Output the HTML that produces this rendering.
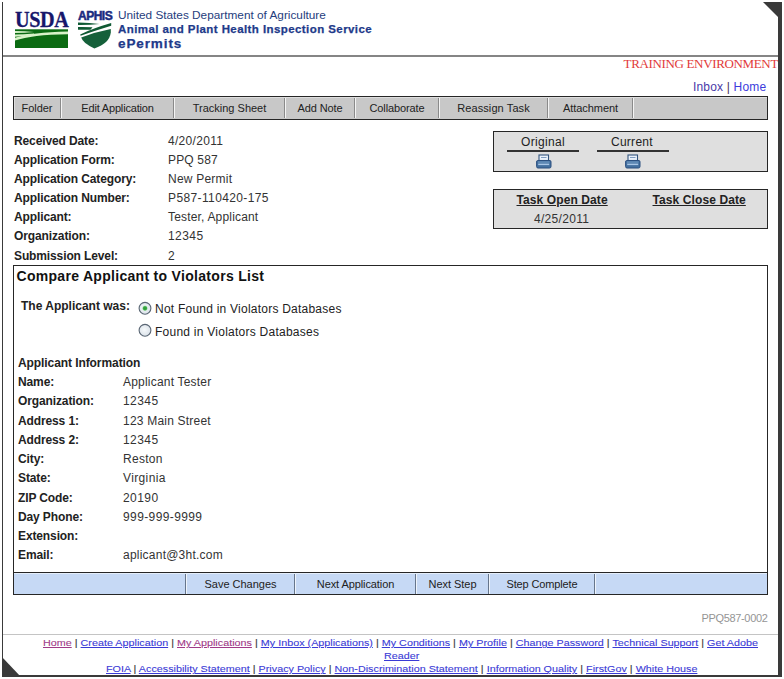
<!DOCTYPE html>
<html><head><meta charset="utf-8"><style>
html,body{margin:0;padding:0;}
body{width:784px;height:679px;position:relative;overflow:hidden;background:#fff;font-family:"Liberation Sans",sans-serif;}
.t{position:absolute;white-space:nowrap;font-kerning:none;}
</style></head><body>
<div class="t" style="left:14.5px;top:6.2px;font:bold 23.4px/26px 'Liberation Serif',serif;color:#17176b;transform:scaleX(0.865);transform-origin:0 0;letter-spacing:-0.5px;-webkit-text-stroke:0.3px #17176b">USDA</div><svg style="position:absolute;left:15px;top:29px" width="53" height="19" viewBox="0 0 53 19">
<rect x="0" y="0.3" width="53" height="18.7" fill="#0b6b12"/>
<path d="M0,2 Q10,2.2 19,3.1 Q10,4.1 0,4.1 Z" fill="#d8f2c8"/>
<path d="M0,5.4 Q8,5.3 19,4.4 L19,5.6 Q9,7.4 0,7.8 Z" fill="#d8f2c8"/>
<path d="M0,8.8 C12,5.2 28,3 53,2.6 L53,5.3 C28,5.6 12,7.8 0,11.6 Z" fill="#d8f2c8"/>
</svg><div class="t" style="left:78px;top:9px;font:900 12px/14px 'Liberation Sans',sans-serif;color:#1a2a80;-webkit-text-stroke:0.5px #1a2a80;letter-spacing:-0.5px">APHIS</div><svg style="position:absolute;left:78px;top:22px" width="34" height="27" viewBox="0 0 34 27">
<path d="M0,0.4 Q12,0.6 21.5,2 Q12,3.2 0,3.1 Z" fill="#0f5a34"/>
<path d="M0,5.1 Q8,5 14.5,5.3 L12.5,7.7 L0,7.7 Z" fill="#0f5a34"/>
<path d="M2.2,12.4 Q16,6 33.2,1.1 L33.2,3.7 Q17,8.6 2.6,13.8 Z" fill="#0f5a34"/>
<path d="M3.2,15.6 Q18,9.6 32.8,6.9 L32.8,10.5 Q31.5,21.5 16.4,26.4 Q5,21.5 3.2,15.6 Z" fill="#15603a"/>
</svg><div class="t" style="left:118px;top:8.41px;font:normal 11.8px/15px 'Liberation Sans',sans-serif;color:#263d7d;letter-spacing:0px;">United States Department of Agriculture</div>
<div class="t" style="left:118px;top:22.02px;font:bold 11.5px/14px 'Liberation Sans',sans-serif;color:#1e3a8a;letter-spacing:0.42px;-webkit-text-stroke:0.25px #1e3a8a;">Animal and Plant Health Inspection Service</div>
<div class="t" style="left:118px;top:35.32px;font:bold 13.5px/17px 'Liberation Sans',sans-serif;color:#1e3a8a;letter-spacing:0.9px;-webkit-text-stroke:0.25px #1e3a8a;">ePermits</div>
<div style="position:absolute;left:3px;top:55px;width:775px;height:2px;background:#858585"></div><div class="t" style="right:6px;top:56.30px;font:normal 13px/16px 'Liberation Serif',sans-serif;color:#e23a3a;letter-spacing:-0.35px;">TRAINING ENVIRONMENT</div>
<div class="t" style="left:693px;top:80.34px;font:normal 12px/15px 'Liberation Sans',sans-serif;color:#222;letter-spacing:0.17px;"><span style="color:#4a3aa8">Inbox</span> <span style="color:#4a3060">|</span> <span style="color:#3c3cdc">Home</span></div>
<div style="position:absolute;left:13px;top:96px;width:753px;height:22px;border:1px solid #262626;background:#c8c8c8"></div><div style="position:absolute;left:14px;top:97px;width:753px;height:1px;background:#dedede"></div><div style="position:absolute;left:14px;top:97px;width:1px;height:22px;background:#dedede"></div><div style="position:absolute;left:60px;top:98px;width:1px;height:20px;background:#8a8a8a"></div><div style="position:absolute;left:61px;top:98px;width:1px;height:20px;background:#f4f4f4"></div><div style="position:absolute;left:173px;top:98px;width:1px;height:20px;background:#8a8a8a"></div><div style="position:absolute;left:174px;top:98px;width:1px;height:20px;background:#f4f4f4"></div><div style="position:absolute;left:284px;top:98px;width:1px;height:20px;background:#8a8a8a"></div><div style="position:absolute;left:285px;top:98px;width:1px;height:20px;background:#f4f4f4"></div><div style="position:absolute;left:354px;top:98px;width:1px;height:20px;background:#8a8a8a"></div><div style="position:absolute;left:355px;top:98px;width:1px;height:20px;background:#f4f4f4"></div><div style="position:absolute;left:438px;top:98px;width:1px;height:20px;background:#8a8a8a"></div><div style="position:absolute;left:439px;top:98px;width:1px;height:20px;background:#f4f4f4"></div><div style="position:absolute;left:547px;top:98px;width:1px;height:20px;background:#8a8a8a"></div><div style="position:absolute;left:548px;top:98px;width:1px;height:20px;background:#f4f4f4"></div><div style="position:absolute;left:632px;top:98px;width:1px;height:20px;background:#8a8a8a"></div><div style="position:absolute;left:633px;top:98px;width:1px;height:20px;background:#f4f4f4"></div><div class="t" style="left:14px;width:46px;top:100.55px;text-align:center;font:11px/14px 'Liberation Sans',sans-serif;color:#222;letter-spacing:-0.03px">Folder</div><div class="t" style="left:62px;width:111px;top:100.55px;text-align:center;font:11px/14px 'Liberation Sans',sans-serif;color:#222;letter-spacing:-0.176px">Edit Application</div><div class="t" style="left:175px;width:109px;top:100.55px;text-align:center;font:11px/14px 'Liberation Sans',sans-serif;color:#222;letter-spacing:0.001px">Tracking Sheet</div><div class="t" style="left:286px;width:68px;top:100.55px;text-align:center;font:11px/14px 'Liberation Sans',sans-serif;color:#222;letter-spacing:-0.108px">Add Note</div><div class="t" style="left:356px;width:82px;top:100.55px;text-align:center;font:11px/14px 'Liberation Sans',sans-serif;color:#222;letter-spacing:-0.114px">Collaborate</div><div class="t" style="left:440px;width:107px;top:100.55px;text-align:center;font:11px/14px 'Liberation Sans',sans-serif;color:#222;letter-spacing:0.096px">Reassign Task</div><div class="t" style="left:549px;width:83px;top:100.55px;text-align:center;font:11px/14px 'Liberation Sans',sans-serif;color:#222;letter-spacing:-0.064px">Attachment</div><div class="t" style="left:14px;top:134.34px;font:bold 12px/15px 'Liberation Sans',sans-serif;color:#222;letter-spacing:-0.12px;">Received Date:</div>
<div class="t" style="left:168px;top:134.34px;font:normal 12px/15px 'Liberation Sans',sans-serif;color:#333;letter-spacing:0.299px;">4/20/2011</div>
<div class="t" style="left:14px;top:153.34px;font:bold 12px/15px 'Liberation Sans',sans-serif;color:#222;letter-spacing:-0.12px;">Application Form:</div>
<div class="t" style="left:168px;top:153.34px;font:normal 12px/15px 'Liberation Sans',sans-serif;color:#333;letter-spacing:0.163px;">PPQ 587</div>
<div class="t" style="left:14px;top:172.34px;font:bold 12px/15px 'Liberation Sans',sans-serif;color:#222;letter-spacing:-0.12px;">Application Category:</div>
<div class="t" style="left:168px;top:172.34px;font:normal 12px/15px 'Liberation Sans',sans-serif;color:#333;letter-spacing:0.219px;">New Permit</div>
<div class="t" style="left:14px;top:191.34px;font:bold 12px/15px 'Liberation Sans',sans-serif;color:#222;letter-spacing:-0.12px;">Application Number:</div>
<div class="t" style="left:168px;top:191.34px;font:normal 12px/15px 'Liberation Sans',sans-serif;color:#333;letter-spacing:0.381px;">P587-110420-175</div>
<div class="t" style="left:14px;top:210.34px;font:bold 12px/15px 'Liberation Sans',sans-serif;color:#222;letter-spacing:-0.12px;">Applicant:</div>
<div class="t" style="left:168px;top:210.34px;font:normal 12px/15px 'Liberation Sans',sans-serif;color:#333;letter-spacing:0.176px;">Tester, Applicant</div>
<div class="t" style="left:14px;top:229.34px;font:bold 12px/15px 'Liberation Sans',sans-serif;color:#222;letter-spacing:-0.12px;">Organization:</div>
<div class="t" style="left:168px;top:229.34px;font:normal 12px/15px 'Liberation Sans',sans-serif;color:#333;letter-spacing:0.446px;">12345</div>
<div class="t" style="left:14px;top:249.34px;font:bold 12px/15px 'Liberation Sans',sans-serif;color:#222;letter-spacing:-0.12px;">Submission Level:</div>
<div class="t" style="left:168px;top:249.34px;font:normal 12px/15px 'Liberation Sans',sans-serif;color:#333;letter-spacing:0.446px;">2</div>
<div style="position:absolute;left:493px;top:131px;width:273px;height:39px;border:1px solid #262626;background:#dfdfdf"></div><div class="t" style="left:521px;top:135.34px;font:normal 12px/15px 'Liberation Sans',sans-serif;color:#222;letter-spacing:0.326px;">Original</div>
<div class="t" style="left:611px;top:135.34px;font:normal 12px/15px 'Liberation Sans',sans-serif;color:#222;letter-spacing:0.261px;">Current</div>
<div style="position:absolute;left:507px;top:150px;width:72px;height:2px;background:#333"></div><div style="position:absolute;left:597px;top:150px;width:72px;height:2px;background:#333"></div><svg style="position:absolute;left:536px;top:154px" width="16" height="15" viewBox="0 0 16 15">
<rect x="3" y="1" width="9.5" height="5.5" fill="#eaf2fb" stroke="#33557e" stroke-width="1.1"/>
<rect x="5" y="3" width="5.5" height="1" fill="#7f9cc0"/>
<path d="M1.5,6.5 H14 Q15,6.5 15,8 V12.5 Q15,14 13.5,14 H2 Q0.6,14 0.6,12.5 V8 Q0.6,6.5 1.5,6.5 Z" fill="#44709f" stroke="#2c5080" stroke-width="1"/>
<rect x="2" y="7.6" width="11.5" height="0.9" fill="#7aa2cc"/>
<rect x="2.2" y="9.6" width="11" height="1.5" fill="#a9c6e6"/>
</svg><svg style="position:absolute;left:625px;top:154px" width="16" height="15" viewBox="0 0 16 15">
<rect x="3" y="1" width="9.5" height="5.5" fill="#eaf2fb" stroke="#33557e" stroke-width="1.1"/>
<rect x="5" y="3" width="5.5" height="1" fill="#7f9cc0"/>
<path d="M1.5,6.5 H14 Q15,6.5 15,8 V12.5 Q15,14 13.5,14 H2 Q0.6,14 0.6,12.5 V8 Q0.6,6.5 1.5,6.5 Z" fill="#44709f" stroke="#2c5080" stroke-width="1"/>
<rect x="2" y="7.6" width="11.5" height="0.9" fill="#7aa2cc"/>
<rect x="2.2" y="9.6" width="11" height="1.5" fill="#a9c6e6"/>
</svg><div style="position:absolute;left:493px;top:189px;width:273px;height:38px;border:1px solid #262626;background:#dfdfdf"></div><div class="t" style="left:516.5px;top:193.34px;font:bold 12px/15px 'Liberation Sans',sans-serif;color:#222;letter-spacing:0.1px;text-decoration:underline;">Task Open Date</div>
<div class="t" style="left:652.5px;top:193.34px;font:bold 12px/15px 'Liberation Sans',sans-serif;color:#222;letter-spacing:0.1px;text-decoration:underline;">Task Close Date</div>
<div class="t" style="left:534px;top:212.34px;font:normal 12px/15px 'Liberation Sans',sans-serif;color:#333;letter-spacing:0.299px;">4/25/2011</div>
<div style="position:absolute;left:13px;top:265px;width:753px;height:328px;border:1px solid #262626;background:#fff"></div><div class="t" style="left:16.5px;top:267.15px;font:bold 14px/18px 'Liberation Sans',sans-serif;color:#111;letter-spacing:0.3px;">Compare Applicant to Violators List</div>
<div class="t" style="left:21px;top:299.34px;font:bold 12px/15px 'Liberation Sans',sans-serif;color:#222;letter-spacing:0px;">The Applicant was:</div>
<svg style="position:absolute;left:137px;top:300px" width="16" height="40" viewBox="0 0 16 40">
<defs><radialGradient id="rg" cx="0.45" cy="0.45" r="0.65"><stop offset="0" stop-color="#f6f9fb"/><stop offset="1" stop-color="#d6dee6"/></radialGradient>
<radialGradient id="gd" cx="0.5" cy="0.5" r="0.5"><stop offset="0" stop-color="#2f9a36"/><stop offset="0.6" stop-color="#3aa844"/><stop offset="1" stop-color="#bfe8c4"/></radialGradient></defs>
<circle cx="8" cy="8.3" r="5.9" fill="url(#rg)" stroke="#5a6674" stroke-width="1.1"/>
<circle cx="8" cy="8.3" r="2.7" fill="url(#gd)"/>
<circle cx="8" cy="30.3" r="5.9" fill="url(#rg)" stroke="#5a6674" stroke-width="1.1"/>
</svg><div class="t" style="left:155px;top:302.34px;font:normal 12px/15px 'Liberation Sans',sans-serif;color:#222;letter-spacing:0.232px;">Not Found in Violators Databases</div>
<div class="t" style="left:155px;top:325.34px;font:normal 12px/15px 'Liberation Sans',sans-serif;color:#222;letter-spacing:0.248px;">Found in Violators Databases</div>
<div class="t" style="left:18px;top:356.34px;font:bold 12px/15px 'Liberation Sans',sans-serif;color:#222;letter-spacing:-0.08px;">Applicant Information</div>
<div class="t" style="left:18px;top:375.34px;font:bold 12px/15px 'Liberation Sans',sans-serif;color:#222;letter-spacing:-0.12px;">Name:</div>
<div class="t" style="left:123px;top:375.34px;font:normal 12px/15px 'Liberation Sans',sans-serif;color:#333;letter-spacing:0.201px;">Applicant Tester</div>
<div class="t" style="left:18px;top:394.34px;font:bold 12px/15px 'Liberation Sans',sans-serif;color:#222;letter-spacing:-0.12px;">Organization:</div>
<div class="t" style="left:123px;top:394.34px;font:normal 12px/15px 'Liberation Sans',sans-serif;color:#333;letter-spacing:0.446px;">12345</div>
<div class="t" style="left:18px;top:414.34px;font:bold 12px/15px 'Liberation Sans',sans-serif;color:#222;letter-spacing:-0.12px;">Address 1:</div>
<div class="t" style="left:123px;top:414.34px;font:normal 12px/15px 'Liberation Sans',sans-serif;color:#333;letter-spacing:0.206px;">123 Main Street</div>
<div class="t" style="left:18px;top:433.34px;font:bold 12px/15px 'Liberation Sans',sans-serif;color:#222;letter-spacing:-0.12px;">Address 2:</div>
<div class="t" style="left:123px;top:433.34px;font:normal 12px/15px 'Liberation Sans',sans-serif;color:#333;letter-spacing:0.446px;">12345</div>
<div class="t" style="left:18px;top:452.34px;font:bold 12px/15px 'Liberation Sans',sans-serif;color:#222;letter-spacing:-0.12px;">City:</div>
<div class="t" style="left:123px;top:452.34px;font:normal 12px/15px 'Liberation Sans',sans-serif;color:#333;letter-spacing:0.283px;">Reston</div>
<div class="t" style="left:18px;top:471.34px;font:bold 12px/15px 'Liberation Sans',sans-serif;color:#222;letter-spacing:-0.12px;">State:</div>
<div class="t" style="left:123px;top:471.34px;font:normal 12px/15px 'Liberation Sans',sans-serif;color:#333;letter-spacing:0.368px;">Virginia</div>
<div class="t" style="left:18px;top:491.34px;font:bold 12px/15px 'Liberation Sans',sans-serif;color:#222;letter-spacing:-0.12px;">ZIP Code:</div>
<div class="t" style="left:123px;top:491.34px;font:normal 12px/15px 'Liberation Sans',sans-serif;color:#333;letter-spacing:0.446px;">20190</div>
<div class="t" style="left:18px;top:510.34px;font:bold 12px/15px 'Liberation Sans',sans-serif;color:#222;letter-spacing:-0.12px;">Day Phone:</div>
<div class="t" style="left:123px;top:510.34px;font:normal 12px/15px 'Liberation Sans',sans-serif;color:#333;letter-spacing:0.392px;">999-999-9999</div>
<div class="t" style="left:18px;top:529.34px;font:bold 12px/15px 'Liberation Sans',sans-serif;color:#222;letter-spacing:-0.12px;">Extension:</div>
<div class="t" style="left:18px;top:548.34px;font:bold 12px/15px 'Liberation Sans',sans-serif;color:#222;letter-spacing:-0.12px;">Email:</div>
<div class="t" style="left:123px;top:548.34px;font:normal 12px/15px 'Liberation Sans',sans-serif;color:#333;letter-spacing:0.231px;">aplicant@3ht.com</div>
<div style="position:absolute;left:14px;top:572px;width:753px;height:1px;background:#262626"></div><div style="position:absolute;left:14px;top:573px;width:753px;height:21px;background:#c6d9f5"></div><div style="position:absolute;left:14px;top:573px;width:753px;height:1px;background:#e4eefb"></div><div style="position:absolute;left:185px;top:574px;width:1px;height:20px;background:#66768c"></div><div style="position:absolute;left:186px;top:574px;width:1px;height:20px;background:#eef4fc"></div><div style="position:absolute;left:294px;top:574px;width:1px;height:20px;background:#66768c"></div><div style="position:absolute;left:295px;top:574px;width:1px;height:20px;background:#eef4fc"></div><div style="position:absolute;left:415px;top:574px;width:1px;height:20px;background:#66768c"></div><div style="position:absolute;left:416px;top:574px;width:1px;height:20px;background:#eef4fc"></div><div style="position:absolute;left:488px;top:574px;width:1px;height:20px;background:#66768c"></div><div style="position:absolute;left:489px;top:574px;width:1px;height:20px;background:#eef4fc"></div><div style="position:absolute;left:594px;top:574px;width:1px;height:20px;background:#66768c"></div><div style="position:absolute;left:595px;top:574px;width:1px;height:20px;background:#eef4fc"></div><div class="t" style="left:187px;width:107px;top:577.04px;text-align:center;font:11px/14px 'Liberation Sans',sans-serif;color:#222;letter-spacing:-0.013px">Save Changes</div><div class="t" style="left:296px;width:119px;top:577.04px;text-align:center;font:11px/14px 'Liberation Sans',sans-serif;color:#222;letter-spacing:-0.093px">Next Application</div><div class="t" style="left:417px;width:71px;top:577.04px;text-align:center;font:11px/14px 'Liberation Sans',sans-serif;color:#222;letter-spacing:-0.034px">Next Step</div><div class="t" style="left:490px;width:104px;top:577.04px;text-align:center;font:11px/14px 'Liberation Sans',sans-serif;color:#222;letter-spacing:-0.136px">Step Complete</div><div class="t" style="right:16.5px;top:611.19px;font:normal 11px/14px 'Liberation Sans',sans-serif;color:#959595;letter-spacing:-0.33px;">PPQ587-0002</div>
<div style="position:absolute;left:3px;top:634px;width:775px;height:1px;background:#c4c4c4"></div><div class="t" style="left:43px;top:637.21px;font:normal 9.5px/12px 'Liberation Sans',sans-serif;color:#222;letter-spacing:0.02px;transform:scaleX(1.13);transform-origin:0 0;-webkit-text-stroke:0.1px currentColor;"><span style="color:#a03a88;text-decoration:underline">Home</span> <span style="color:#333">|</span> <span style="color:#3a3ad6;text-decoration:underline">Create Application</span> <span style="color:#333">|</span> <span style="color:#a03a88;text-decoration:underline">My Applications</span> <span style="color:#333">|</span> <span style="color:#3a3ad6;text-decoration:underline">My Inbox (Applications)</span> <span style="color:#333">|</span> <span style="color:#3a3ad6;text-decoration:underline">My Conditions</span> <span style="color:#333">|</span> <span style="color:#3a3ad6;text-decoration:underline">My Profile</span> <span style="color:#333">|</span> <span style="color:#3a3ad6;text-decoration:underline">Change Password</span> <span style="color:#333">|</span> <span style="color:#3a3ad6;text-decoration:underline">Technical Support</span> <span style="color:#333">|</span> <span style="color:#3a3ad6;text-decoration:underline">Get Adobe</span></div>
<div class="t" style="left:384px;top:650.21px;font:normal 9.5px/12px 'Liberation Sans',sans-serif;color:#222;letter-spacing:0.02px;transform:scaleX(1.13);transform-origin:0 0;-webkit-text-stroke:0.1px currentColor;"><span style="color:#3a3ad6;text-decoration:underline">Reader</span></div>
<div class="t" style="left:106px;top:663.21px;font:normal 9.5px/12px 'Liberation Sans',sans-serif;color:#222;letter-spacing:0.02px;transform:scaleX(1.13);transform-origin:0 0;-webkit-text-stroke:0.1px currentColor;"><span style="color:#3a3ad6;text-decoration:underline">FOIA</span> <span style="color:#333">|</span> <span style="color:#3a3ad6;text-decoration:underline">Accessibility Statement</span> <span style="color:#333">|</span> <span style="color:#3a3ad6;text-decoration:underline">Privacy Policy</span> <span style="color:#333">|</span> <span style="color:#3a3ad6;text-decoration:underline">Non-Discrimination Statement</span> <span style="color:#333">|</span> <span style="color:#3a3ad6;text-decoration:underline">Information Quality</span> <span style="color:#333">|</span> <span style="color:#3a3ad6;text-decoration:underline">FirstGov</span> <span style="color:#333">|</span> <span style="color:#3a3ad6;text-decoration:underline">White House</span></div>
<div style="position:absolute;left:2px;top:2px;width:1px;height:675px;background:#3a3a3a"></div><div style="position:absolute;left:2px;top:675px;width:780px;height:2px;background:#3a3a3a"></div><div style="position:absolute;left:778px;top:2px;width:4px;height:675px;background:#3a3a3a"></div><svg style="position:absolute;left:0;top:0" width="784" height="679"><polygon points="763,2 782,2 782,21 778,17" fill="#3a3a3a"/><polygon points="2,657 2,677 21,677" fill="#3a3a3a"/></svg>
</body></html>
